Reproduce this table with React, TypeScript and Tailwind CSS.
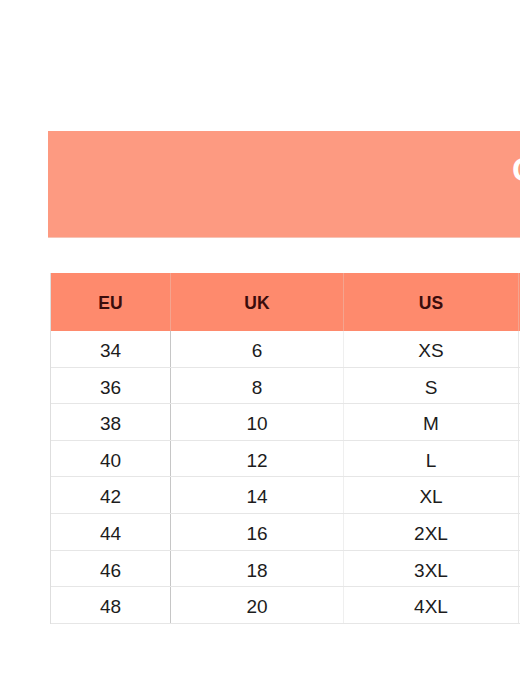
const rows: [string, string, string][] = [
  ["34", "6", "XS"],
  ["36", "8", "S"],
  ["38", "10", "M"],
  ["40", "12", "L"],
  ["42", "14", "XL"],
  ["44", "16", "2XL"],
  ["46", "18", "3XL"],
  ["48", "20", "4XL"],
];

function HeaderCell({ label, className }: { label: string; className: string }) {
  return (
    <div
      className={`flex items-center justify-center border-r border-[#f4a48f] pt-[2px] text-[17.5px] font-bold text-[#3a0c0c] ${className}`}
    >
      {label}
    </div>
  );
}

export default function App() {
  return (
    <div
      className="h-[684px] w-[520px] overflow-hidden bg-white"
      style={{ fontFamily: '"Liberation Sans", Arial, sans-serif' }}
    >
      <div className="flex w-[760px] flex-col pl-[48px] pt-[131px]">
        {/* banner, cropped by the window on the right */}
        <div className="flex h-[106px] items-start bg-[#fd9a81] pl-[464px] pt-[14px] shadow-[0_1px_0_#f6c3b5]">
          <span className="whitespace-nowrap text-[33px] font-bold text-white">C</span>
        </div>

        {/* size table */}
        <div className="ml-[2px] mt-[36px] flex flex-col border-l border-[#dedede]">
          <div className="flex h-[58px] bg-[#fe8a6d]">
            <HeaderCell label="EU" className="w-[120px]" />
            <HeaderCell label="UK" className="w-[173px]" />
            <HeaderCell label="US" className="w-[175px]" />
            <div className="w-[175px]" />
          </div>
          {rows.map(([eu, uk, us]) => (
            <div
              key={eu}
              className="flex h-[36.6px] border-b border-[#e6e6e6] text-[19px] text-[#1c1c1c]"
            >
              <div className="flex w-[120px] items-center justify-center border-r-[1.5px] border-[#c6c6c6] pt-[5px]">
                {eu}
              </div>
              <div className="flex w-[173px] items-center justify-center border-r border-[#efefef] pt-[5px]">
                {uk}
              </div>
              <div className="flex w-[175px] items-center justify-center border-r border-[#e8e8e8] pt-[5px]">
                {us}
              </div>
              <div className="w-[175px]" />
            </div>
          ))}
        </div>
      </div>
    </div>
  );
}
